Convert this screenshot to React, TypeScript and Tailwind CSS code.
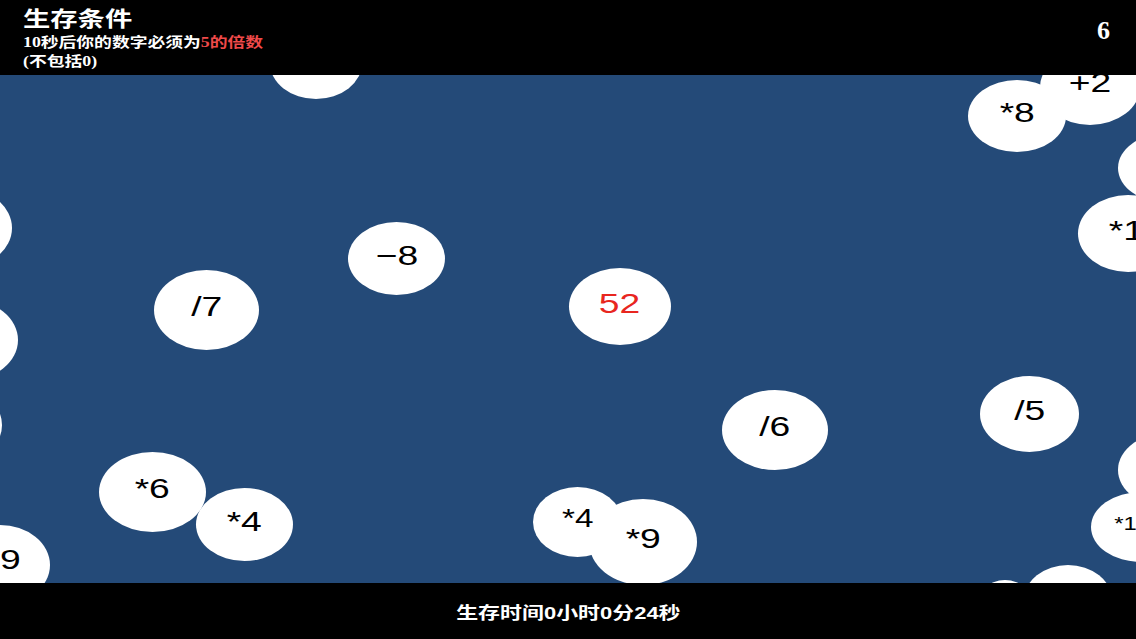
import React from "react";

type Blob = {
  l: number;
  t: number;
  w: number;
  h: number;
  label?: string;
  size?: number;
  red?: boolean;
  dx?: number;
  dy?: number;
};

const blobs: Blob[] = [
  { l: 270, t: -48, w: 92, h: 72 },
  { l: 1040, t: -26, w: 100, h: 76, label: "+2", dy: -2 },
  { l: 968, t: 5, w: 98, h: 72, label: "*8" },
  { l: 1118, t: 58, w: 100, h: 70 },
  { l: 1078, t: 120, w: 100, h: 77, label: "*1", dx: -4 },
  { l: -88, t: 113, w: 100, h: 80 },
  { l: -82, t: 225, w: 100, h: 80 },
  { l: -98, t: 310, w: 100, h: 80 },
  { l: 348, t: 147, w: 97, h: 73, label: "\u22128" },
  { l: 154, t: 195, w: 105, h: 80, label: "/7" },
  { l: 569, t: 193, w: 102, h: 77, label: "52", red: true },
  { l: 722, t: 315, w: 106, h: 80, label: "/6" },
  { l: 980, t: 301, w: 99, h: 76, label: "/5" },
  { l: 1118, t: 358, w: 100, h: 74 },
  { l: 1091, t: 417, w: 100, h: 70, label: "*1", size: 18, dx: -30 },
  { l: 1024, t: 490, w: 88, h: 70 },
  { l: 975, t: 505, w: 60, h: 60 },
  { l: 99, t: 377, w: 107, h: 80, label: "*6" },
  { l: 196, t: 413, w: 97, h: 73, label: "*4" },
  { l: -50, t: 450, w: 100, h: 80, label: "*9", dx: 6, dy: -4 },
  { l: 533, t: 412, w: 89, h: 70, label: "*4", size: 25, dy: -2 },
  { l: 589, t: 424, w: 108, h: 86, label: "*9" },
];

export default function App() {
  return (
    <div className="w-[1136px] h-[639px] flex flex-col bg-black overflow-hidden">
      <header
        className="h-[75px] shrink-0 bg-black flex justify-between text-white relative z-10"
        style={{ fontFamily: '"Liberation Serif", "Noto Sans CJK SC", serif' }}
      >
        <div className="pl-[23px] pt-[5px] flex flex-col items-start">
          <div className="text-[21px] leading-[28px] font-bold origin-left scale-x-[1.3]">
            生存条件
          </div>
          <div className="text-[14px] leading-[19px] font-bold origin-left scale-x-[1.27]">
            10秒后你的数字必须为<span className="text-[#f04a4a]">5的倍数</span>
          </div>
          <div className="text-[14px] leading-[19px] font-bold origin-left scale-x-[1.27]">
            (不包括0)
          </div>
        </div>
        <div className="pr-[26px] pt-[18px] text-[26px] leading-[26px] font-bold">6</div>
      </header>
      <main className="flex-1 relative overflow-hidden bg-[#244a78]">
        {blobs.map((b, i) => (
          <div
            key={i}
            className="absolute rounded-[50%] bg-white flex items-center justify-center"
            style={{ left: b.l, top: b.t, width: b.w, height: b.h }}
          >
            {b.label && (
              <span
                className={`inline-block scale-x-[1.33] leading-none whitespace-nowrap ${
                  b.red ? "text-[#e8261f]" : "text-black"
                }`}
                style={{
                  fontFamily: '"Liberation Sans", Arial, sans-serif',
                  fontSize: b.size ?? 28,
                  marginLeft: b.dx ?? 0,
                  marginTop: (b.dy ?? 0) - 6,
                }}
              >
                {b.label}
              </span>
            )}
          </div>
        ))}
      </main>
      <footer
        className="h-[56px] shrink-0 bg-black flex items-center justify-center text-white relative z-10"
        style={{ fontFamily: '"Liberation Sans", "Noto Sans CJK SC", sans-serif' }}
      >
        <div className="text-[16.5px] font-semibold scale-x-[1.33] leading-none pt-[4px]">生存时间0小时0分24秒</div>
      </footer>
    </div>
  );
}
